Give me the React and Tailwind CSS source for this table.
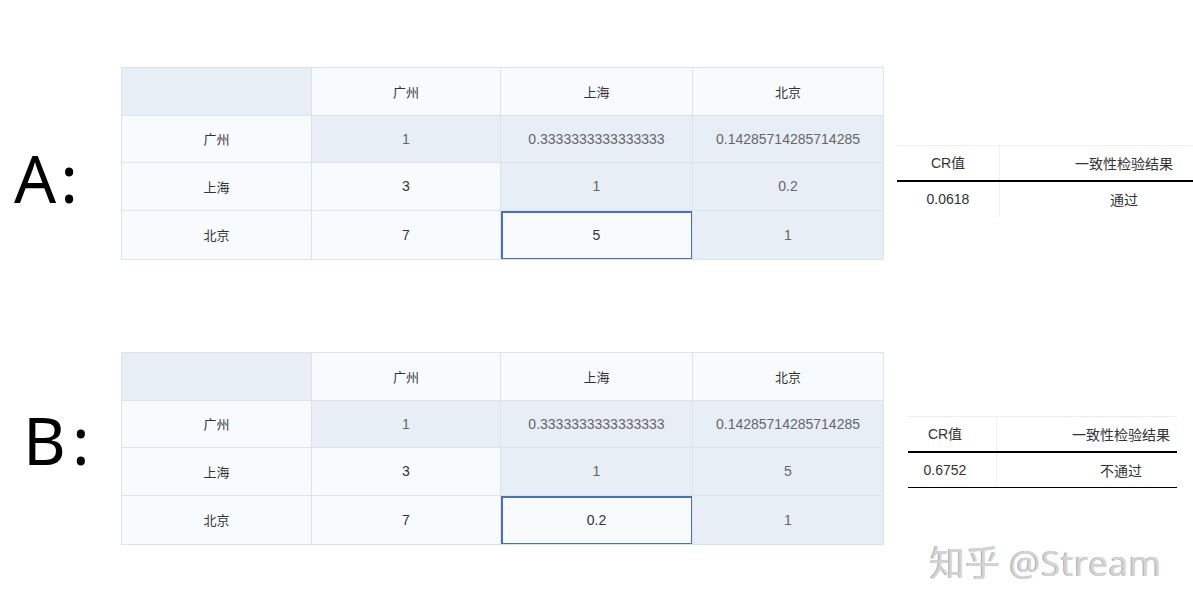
import React from 'react';

const cities = ['广州', '上海', '北京'];

function MatrixTable({ rows }) {
  // rows: 3x3 values; upper triangle incl. diagonal tinted, [2][1] selected
  const cellBase = 'flex items-center justify-center border-r border-b border-[#dde3ea]';
  return (
    <div className="self-start grid grid-cols-[190px_189px_192px_191px] grid-rows-[48px_47px_48px_49px] border-t border-l border-[#dde3ea] w-[763px]">
      <div className={`${cellBase} bg-[#e8eef6]`} />
      {cities.map((c) => (
        <div key={c} className={`${cellBase} bg-[#f8fbfe] text-[13px] text-[#333]`}>
          {c}
        </div>
      ))}
      {rows.map((row, i) => (
        <React.Fragment key={i}>
          <div className={`${cellBase} bg-[#f8fbfe] text-[13px] text-[#333]`}>{cities[i]}</div>
          {row.map((v, j) => {
            const tinted = j >= i;
            const selected = i === 2 && j === 1;
            return (
              <div
                key={j}
                className={`${cellBase} font-['Liberation_Sans',sans-serif] text-[14px] ${
                  tinted ? 'bg-[#e8eef6] text-[#666]' : 'bg-[#f8fbfe] text-[#333]'
                } ${selected ? 'shadow-[inset_1px_1px_0_1px_#4a70b5,inset_-1px_-1px_0_0_#4a70b5]' : ''}`}
              >
                {v}
              </div>
            );
          })}
        </React.Fragment>
      ))}
    </div>
  );
}

function CRTable({ cr, result, bottomLine }) {
  return (
    <div className="w-[351px] text-[14px] text-[#333]">
      <div className="flex h-[35px] border-t border-[#eeeeee]">
        <div className="w-[103px] flex items-center justify-center border-r border-[#f0f0f0]">
          <span className="font-['Liberation_Sans','Noto_Sans_CJK_SC',sans-serif]">CR值</span>
        </div>
        <div className="w-[248px] flex items-center justify-center">一致性检验结果</div>
      </div>
      <div className="h-[2px] bg-black" />
      <div className={`flex h-[35px] ${bottomLine ? 'border-b border-black' : ''}`}>
        <div className="w-[103px] flex items-center justify-center border-r border-[#f0f0f0] font-['Liberation_Sans',sans-serif]">
          {cr}
        </div>
        <div className="w-[248px] flex items-center justify-center">{result}</div>
      </div>
    </div>
  );
}

export default function App() {
  return (
    <div className="relative w-[1193px] h-[610px] overflow-hidden bg-white font-['Noto_Sans_CJK_SC','Noto_Sans',sans-serif]">
      {/* A */}
      <div className="flex items-start pt-[67px] h-[352px]">
        <div className="w-[121px] shrink-0 pt-[70px] pl-[14px]">
          <span className="font-['Noto_Sans',sans-serif] text-[66px] leading-[80px] text-black tracking-[4px]">A:</span>
        </div>
        <MatrixTable
          rows={[
            ['1', '0.3333333333333333', '0.14285714285714285'],
            ['3', '1', '0.2'],
            ['7', '5', '1'],
          ]}
        />
        <div className="ml-[13px] mt-[78px] w-[296px] overflow-hidden">
          <CRTable cr="0.0618" result="通过" />
        </div>
      </div>

      {/* B */}
      <div className="flex items-start h-[258px]">
        <div className="w-[121px] shrink-0 pt-[47px] pl-[23px]">
          <span className="font-['Noto_Sans',sans-serif] text-[66px] leading-[80px] text-black tracking-[6px]">B:</span>
        </div>
        <MatrixTable
          rows={[
            ['1', '0.3333333333333333', '0.14285714285714285'],
            ['3', '1', '5'],
            ['7', '0.2', '1'],
          ]}
        />
        <div className="ml-[24px] mt-[64px] w-[269px] h-[73px] overflow-hidden">
          <div className="-ml-[14px]">
            <CRTable cr="0.6752" result="不通过" bottomLine />
          </div>
        </div>
      </div>

      {/* watermark */}
      <div className="absolute left-[930px] top-[537px] text-[35px] leading-[48px] tracking-[0.5px] text-[#d4d4d4] [text-shadow:-1px_0_0_#a8a8a8] font-['Noto_Sans_CJK_SC',sans-serif]">
        知乎 <span className="font-['Noto_Sans',sans-serif]">@Stream</span>
      </div>
    </div>
  );
}
